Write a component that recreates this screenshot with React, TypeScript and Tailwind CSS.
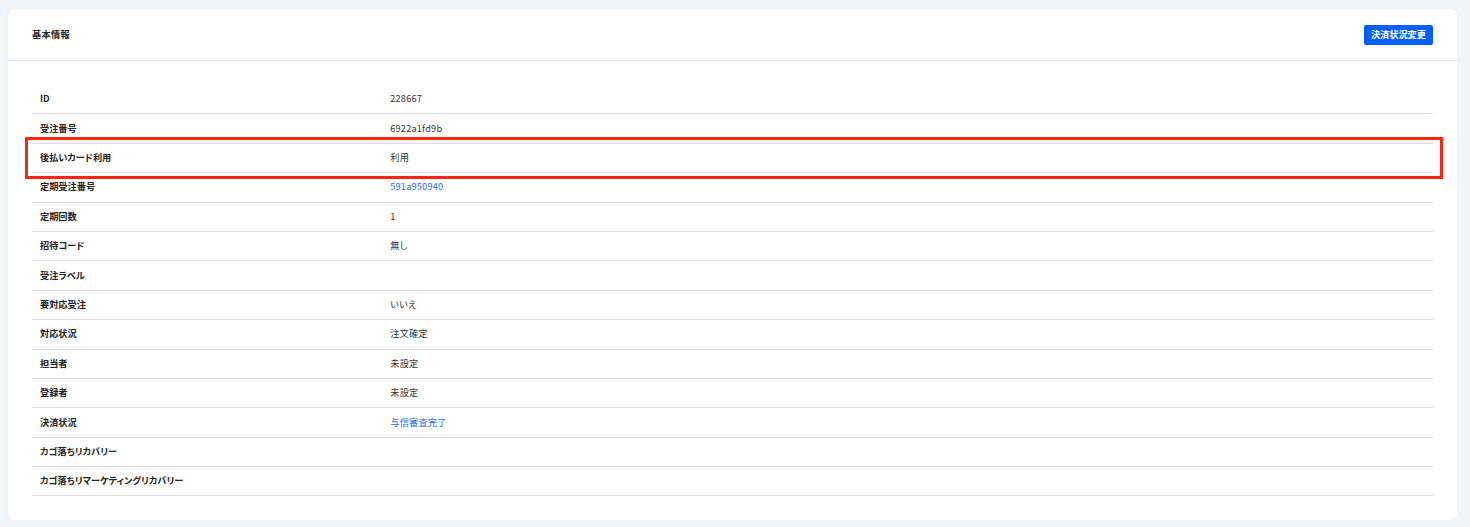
type Row = {
  label: string;
  value?: string;
  link?: boolean;
  highlight?: boolean;
};

const rows: Row[] = [
  { label: "ID", value: "228667" },
  { label: "受注番号", value: "6922a1fd9b" },
  { label: "後払いカード利用", value: "利用", highlight: true },
  { label: "定期受注番号", value: "591a950940", link: true },
  { label: "定期回数", value: "1" },
  { label: "招待コード", value: "無し" },
  { label: "受注ラベル" },
  { label: "要対応受注", value: "いいえ" },
  { label: "対応状況", value: "注文確定" },
  { label: "担当者", value: "未設定" },
  { label: "登録者", value: "未設定" },
  { label: "決済状況", value: "与信審査完了", link: true },
  { label: "カゴ落ちリカバリー" },
  { label: "カゴ落ちリマーケティングリカバリー" },
];

export default function App() {
  return (
    <div
      className="min-h-[527px] bg-[#f2f5f7] pl-2 pr-[13px] pt-[9px] pb-[7px] text-[#222] [font-feature-settings:'palt']"
      style={{ fontFamily: '"Noto Sans CJK JP", "Noto Sans", sans-serif' }}
    >
      <section className="rounded-md bg-white shadow-[0_0_2px_rgba(0,0,0,0.06)]">
        {/* header */}
        <div className="flex h-[52px] items-center justify-between border-b border-[#e1e1e4] px-6">
          <h2 className="text-[9.2px] font-bold tracking-[0.3px]">基本情報</h2>
          <button className="h-5 rounded-[2px] bg-[#005efc] px-[7px] text-[9.2px] font-bold text-white">
            決済状況変更
          </button>
        </div>

        {/* table */}
        <div className="px-6 pt-6 pb-6">
          {rows.map((r) => (
            <div
              key={r.label}
              className="relative flex h-[29.4px] items-center border-b border-[#dcdce4] text-[9.2px]"
            >
              <div className="w-1/4 px-2 font-bold">{r.label}</div>
              <div className={`px-2 tracking-[0.2px] ${r.link ? "text-[#1f6ee8]" : "text-[#333]"}`}>
                {r.value}
              </div>
              {r.highlight && (
                <div className="pointer-events-none absolute -top-[7px] -bottom-[7px] -left-[7px] -right-[10px] border-[3px] border-[#ff2418]" />
              )}
            </div>
          ))}
        </div>
      </section>
    </div>
  );
}
